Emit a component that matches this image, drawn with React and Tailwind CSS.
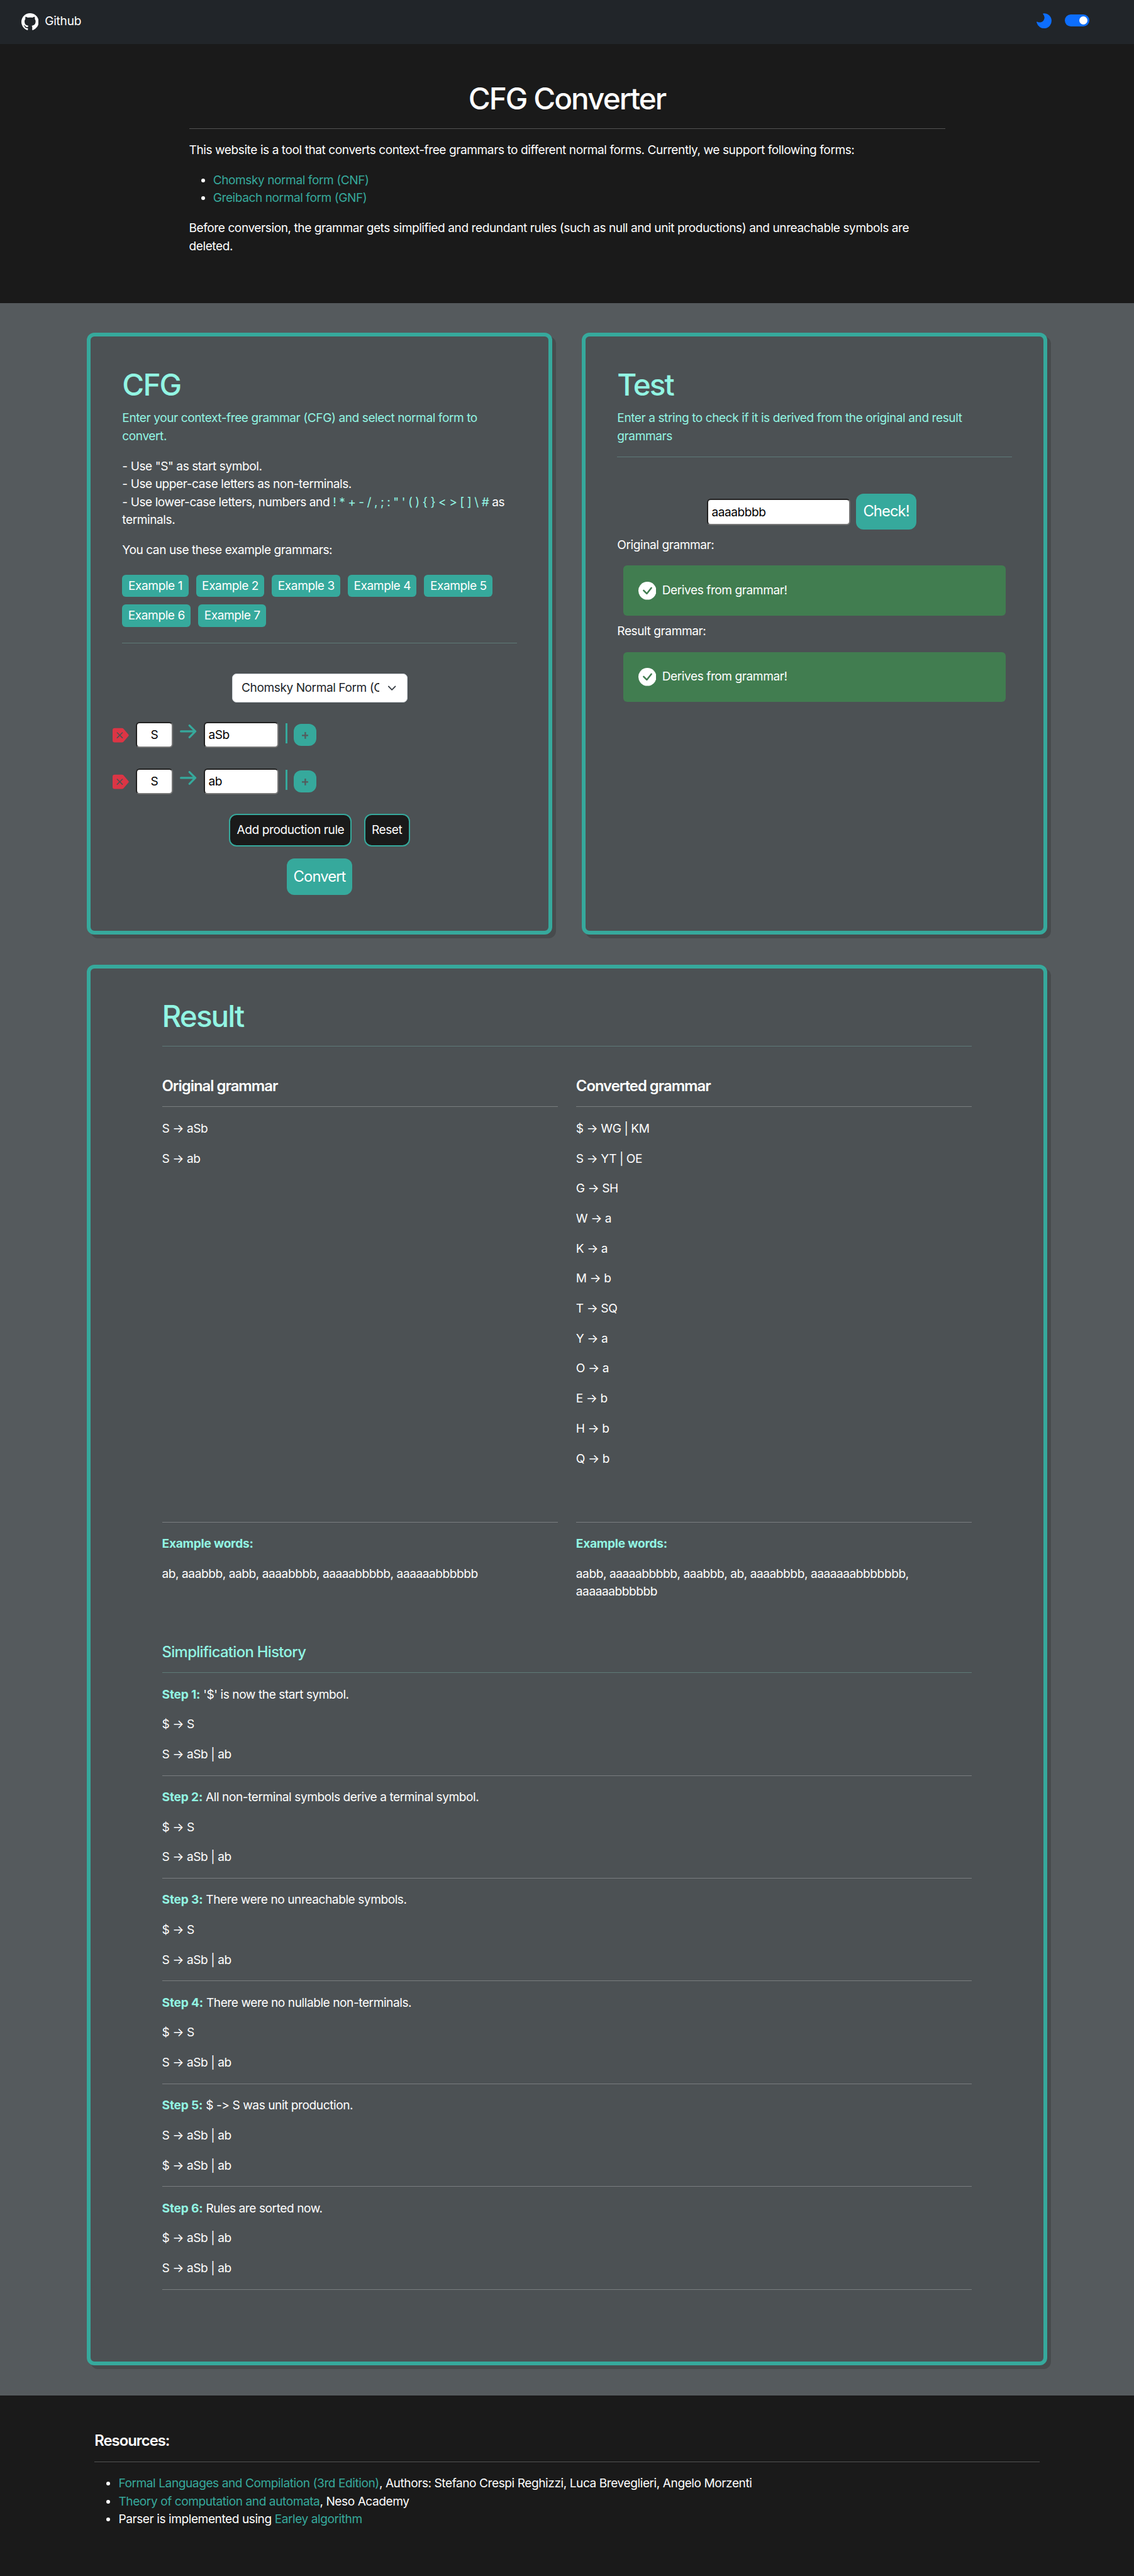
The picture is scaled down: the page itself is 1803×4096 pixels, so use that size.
import React from "react";
import { BsBackspaceReverseFill, BsGithub } from "react-icons/bs";

const STEPS = [
  { text: "'$' is now the start symbol.", rules: ["$ → S", "S → aSb | ab"] },
  { text: "All non-terminal symbols derive a terminal symbol.", rules: ["$ → S", "S → aSb | ab"] },
  { text: "There were no unreachable symbols.", rules: ["$ → S", "S → aSb | ab"] },
  { text: "There were no nullable non-terminals.", rules: ["$ → S", "S → aSb | ab"] },
  { text: "$ -> S was unit production.", rules: ["S → aSb | ab", "$ → aSb | ab"] },
  { text: "Rules are sorted now.", rules: ["$ → aSb | ab", "S → aSb | ab"] },
];

const CONVERTED = [
  "$ → WG | KM",
  "S → YT | OE",
  "G → SH",
  "W → a",
  "K → a",
  "M → b",
  "T → SQ",
  "Y → a",
  "O → a",
  "E → b",
  "H → b",
  "Q → b",
];

function Rule({ mint = false }) {
  return (
    <div
      className={
        "mt-[17.98px] mb-[20.37px] h-px w-full shrink-0 " + (mint ? "bg-[#5e7a78]" : "bg-[#797d7f]")
      }
    />
  );
}

function DarkRule() {
  return <div className="mt-[18.08px] mb-[20.27px] h-px w-full bg-[#535353]" />;
}

function Card({ className, children }) {
  return (
    <section
      className={
        "flex flex-col rounded-[12px] border-[6px] border-[#36a99c] bg-[#4c5154] shadow-[6px_6px_0_#474b4d] " +
        className
      }
    >
      {children}
    </section>
  );
}

function Title({ children }) {
  return (
    <h1 className="text-[47.7px] leading-[57.24px] font-medium tracking-[-0.041em] text-[#92f5e3]">
      {children}
    </h1>
  );
}

function ExampleButton({ n, className }) {
  return (
    <button
      className={
        "h-[35.8px] rounded-[6px] bg-[#36a99c] pt-px text-center whitespace-nowrap " + className
      }
    >
      Example {n}
    </button>
  );
}

function InsetInput({ value, className }) {
  return (
    <input
      readOnly
      defaultValue={value}
      className={
        "h-[41.7px] shrink-0 rounded-[6px] border-2 border-t-[#212121] border-r-[#767676] border-b-[#767676] border-l-[#212121] bg-white text-black outline-none " +
        className
      }
    />
  );
}

function ProductionRow({ value }) {
  return (
    <div className="-ml-[15.5px] flex h-[41.7px] items-start">
      <BsBackspaceReverseFill className="mt-[8.2px] h-[26.2px] w-[26.2px] shrink-0 text-[#dc3545]" />
      <InsetInput value="S" className="ml-[10.7px] w-[59.4px] text-center" />
      <svg
        viewBox="0 0 44 37"
        className="mt-[4.2px] ml-[11.3px] h-[22px] w-[26.2px] shrink-0"
        fill="none"
        stroke="#36a99c"
        strokeWidth="5.4"
        strokeLinecap="round"
        strokeLinejoin="round"
      >
        <path d="M2.7 18.4H41M25.6 2.7L41.3 18.4L25.6 34.2" />
      </svg>
      <InsetInput value={value} className="ml-[11.3px] w-[119.4px] pl-[5.5px]" />
      <div className="mt-[2.4px] ml-[10.4px] h-[31.8px] w-[3.4px] shrink-0 bg-[#36a99c]" />
      <button className="mt-[3px] ml-[10.1px] flex h-[35.8px] w-[35.8px] shrink-0 items-center justify-center rounded-[12px] bg-[#36a99c]">
        <svg viewBox="0 0 18 18" className="mt-[2px] h-[10.8px] w-[10.8px]" stroke="#545b5d" strokeWidth="3.8">
          <path d="M9 0V18M0 9H18" />
        </svg>
      </button>
    </div>
  );
}

function SuccessAlert() {
  return (
    <div className="mx-[9.5px] flex h-[79.9px] items-center rounded-[6px] bg-[#417d50] pl-[23.85px]">
      <svg viewBox="0 0 48 48" className="h-[28.6px] w-[28.6px]">
        <circle cx="24" cy="24" r="24" fill="#fff" />
        <path
          d="M14 23.2L22.4 31.8L34.7 16.3"
          fill="none"
          stroke="#417d50"
          strokeWidth="4.2"
          strokeLinecap="round"
          strokeLinejoin="round"
        />
      </svg>
      <span className="ml-[9.5px]">Derives from grammar!</span>
    </div>
  );
}

function Production({ children }) {
  return <p className="mb-[19.08px]">{children}</p>;
}

function GrammarColumn({ title, rules, words }) {
  return (
    <div className="w-[629.6px]">
      <h2 className="text-[23.85px] leading-[28.62px] font-semibold tracking-[-0.042em]">{title}</h2>
      <Rule />
      <div className="h-[620.9px]">
        {rules.map((r) => (
          <Production key={r}>{r}</Production>
        ))}
      </div>
      <Rule />
      <p className="font-bold tracking-[-0.012em] text-[#92f5e3]">Example words:</p>
      <p className="mt-[19.08px] h-[57.24px]">{words}</p>
    </div>
  );
}

export default function App() {
  return (
    <div className="flex h-[4096px] w-[1803px] flex-col overflow-hidden bg-[#555a5d] font-['Inter','Liberation_Sans',sans-serif] text-[19.08px] leading-[28.62px] tracking-[-0.0225em] text-white">
      <nav className="flex h-[70.4px] shrink-0 items-start bg-[#212529]">
        <BsGithub className="mt-[21.2px] ml-[33.6px] h-[27.6px] w-[27.6px]" />
        <span className="mt-[20.2px] ml-[10px] tracking-[-0.012em]">Github</span>
        <svg viewBox="0 0 120 122" className="mt-[21.3px] ml-auto h-[24.3px] w-[23.9px]">
          <path
            fill="#0d6efd"
            d="M60 1A60 60 0 1 1 2 76Q-3 65 8 69A38 38 0 0 0 54 10Q46 2 60 1Z"
          />
        </svg>
        <div className="mt-[22.6px] mr-[71.5px] ml-[21.5px] flex h-[19.2px] w-[38.2px] items-center justify-end rounded-full bg-[#0d6efd] pr-[3px]">
          <div className="h-[12.8px] w-[12.8px] rounded-full bg-white" />
        </div>
      </nav>

      <header className="flex h-[411.4px] shrink-0 justify-center bg-[#1a1a1a] pt-[58.2px]">
        <div className="w-[1202px]">
          <h1 className="text-center text-[47.7px] leading-[57.24px] font-medium tracking-[-0.041em]">
            CFG Converter
          </h1>
          <DarkRule />
          <p>
            This website is a tool that converts context-free grammars to different normal forms.
            Currently, we support following forms:
          </p>
          <ul className="my-[19.08px] list-disc pl-[38.16px] text-[#36a99c] marker:text-white">
            <li>Chomsky normal form (CNF)</li>
            <li>Greibach normal form (GNF)</li>
          </ul>
          <p>
            Before conversion, the grammar gets simplified and redundant rules (such as null and unit
            productions) and unreachable symbols are
            <br />
            deleted.
          </p>
        </div>
      </header>

      <main className="flex w-full flex-col items-center gap-[47.7px] pt-[47.7px]">
        <div className="flex gap-[47.7px]">
          <Card className="h-[956.4px] w-[739.3px] px-[50px] pt-[49px]">
            <Title>CFG</Title>
            <p className="mt-[9.54px] text-[#92f5e3]">
              Enter your context-free grammar (CFG) and select normal form to
              <br />
              convert.
            </p>
            <p className="mt-[19.08px] whitespace-nowrap">
              - Use "S" as start symbol.
              <br />
              - Use upper-case letters as non-terminals.
              <br />- Use lower-case letters, numbers and{" "}
              <span className="text-[#92f5e3]">{"! * + - / , ; : \" ' ( ) { } < > [ ] \\ #"}</span> as
              <br />
              terminals.
            </p>
            <p className="mt-[19.08px]">You can use these example grammars:</p>
            <div className="mt-[23.8px] flex gap-[12px]">
              <ExampleButton n={1} className="w-[105.4px]" />
              <ExampleButton n={2} className="w-[108.6px]" />
              <ExampleButton n={3} className="w-[109px]" />
              <ExampleButton n={4} className="w-[109px]" />
              <ExampleButton n={5} className="w-[109px]" />
            </div>
            <div className="mt-[11.9px] flex gap-[12px]">
              <ExampleButton n={6} className="w-[109px]" />
              <ExampleButton n={7} className="w-[107.6px]" />
            </div>
            <div className="mt-[25px] h-px w-full shrink-0 bg-[#5e7a78]" />
            <div className="mt-[48px] flex h-[45.5px] w-[279px] shrink-0 items-center justify-between self-center rounded-[7px] border border-[#ced4da] bg-white pr-[16px] pl-[14.6px] text-[#212529]">
              <span className="w-[219.4px] overflow-hidden pt-px whitespace-nowrap">
                Chomsky Normal Form (CNF)
              </span>
              <svg
                viewBox="0 0 16 16"
                className="h-[14.3px] w-[14.3px] shrink-0"
                fill="none"
                stroke="#343a40"
                strokeWidth="2"
                strokeLinecap="round"
                strokeLinejoin="round"
              >
                <path d="m2 5 6 6 6-6" />
              </svg>
            </div>
            <div className="mt-[31px] flex flex-col gap-[32.4px]">
              <ProductionRow value="aSb" />
              <ProductionRow value="ab" />
            </div>
            <div className="mt-[30.4px] flex justify-center gap-[19.2px]">
              <button className="h-[52.6px] w-[195px] rounded-[12px] border-[2.4px] border-[#36a99c] bg-[#1a1a1a] pt-px whitespace-nowrap">
                Add production rule
              </button>
              <button className="h-[52.6px] w-[73px] rounded-[12px] border-[2.4px] border-[#36a99c] bg-[#1a1a1a] pt-px">
                Reset
              </button>
            </div>
            <button className="mt-[19.1px] h-[57.8px] w-[104px] self-center rounded-[12px] bg-[#36a99c] text-[23.85px] tracking-[-0.04em]">
              Convert
            </button>
          </Card>

          <Card className="h-[956.4px] w-[739.3px] px-[50px] pt-[49px]">
            <Title>Test</Title>
            <p className="mt-[9.54px] text-[#92f5e3]">
              Enter a string to check if it is derived from the original and result
              <br />
              grammars
            </p>
            <Rule mint />
            <div className="mt-[37.1px] ml-[142.6px] flex h-[57.4px] items-center">
              <InsetInput value="aaaabbbb" className="mt-[1px] w-[227.8px] pl-[5.5px]" />
              <button className="ml-[9.6px] h-[57.4px] w-[95.4px] rounded-[12px] bg-[#36a99c] text-[23.85px] tracking-[-0.04em]">
                Check!
              </button>
            </div>
            <p className="mt-[10.4px] mb-[18px]">Original grammar:</p>
            <SuccessAlert />
            <p className="mt-[10.7px] mb-[18px]">Result grammar:</p>
            <SuccessAlert />
          </Card>
        </div>

        <Card className="h-[2227.5px] w-[1526.3px] items-center pt-[48.5px]">
          <div className="w-[1287.9px]">
            <Title>Result</Title>
            <Rule mint />
            <div className="mt-[48.6px] flex gap-[28.7px]">
              <GrammarColumn
                title="Original grammar"
                rules={["S → aSb", "S → ab"]}
                words="ab, aaabbb, aabb, aaaabbbb, aaaaabbbbb, aaaaaabbbbbb"
              />
              <GrammarColumn
                title="Converted grammar"
                rules={CONVERTED}
                words={
                  <>
                    aabb, aaaaabbbbb, aaabbb, ab, aaaabbbb, aaaaaaabbbbbbb,
                    <br />
                    aaaaaabbbbbb
                  </>
                }
              />
            </div>
            <h2 className="mt-[66.8px] text-[23.85px] leading-[28.62px] font-medium tracking-[-0.028em] text-[#92f5e3]">
              Simplification History
            </h2>
            <Rule mint />
            {STEPS.map((s, i) => (
              <div key={i}>
                <p>
                  <b className="font-bold tracking-[-0.008em] text-[#92f5e3]">Step {i + 1}:</b>{" "}
                  {s.text}
                </p>
                <p className="mt-[19.08px]">{s.rules[0]}</p>
                <p className="mt-[19.08px]">{s.rules[1]}</p>
                <Rule />
              </div>
            ))}
          </div>
        </Card>
      </main>

      <footer className="mt-[47.7px] flex flex-1 justify-center bg-[#1a1a1a] pt-[58.5px]">
        <div className="w-[1502.5px]">
          <h2 className="text-[23.85px] leading-[28.62px] font-semibold tracking-[-0.042em]">
            Resources:
          </h2>
          <DarkRule />
          <ul className="list-disc pl-[38.16px]">
            <li>
              <a className="text-[#36a99c]">Formal Languages and Compilation (3rd Edition)</a>, Authors:
              Stefano Crespi Reghizzi, Luca Breveglieri, Angelo Morzenti
            </li>
            <li>
              <a className="text-[#36a99c]">Theory of computation and automata</a>, Neso Academy
            </li>
            <li>
              Parser is implemented using <a className="text-[#36a99c]">Earley algorithm</a>
            </li>
          </ul>
        </div>
      </footer>
    </div>
  );
}
